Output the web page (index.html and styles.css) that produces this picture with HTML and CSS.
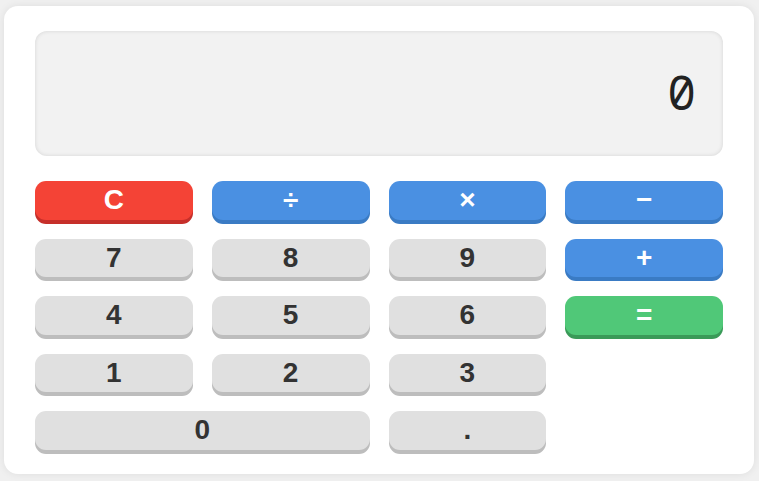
FILE: index.html
```html
<!DOCTYPE html>
<html lang="en">
<head>
<meta charset="utf-8">
<title>Calculator</title>
<link rel="stylesheet" href="styles.css">
</head>
<body>
<div class="calculator">
  <div class="display">0</div>
  <div class="keys">
    <button class="key key-clear">C</button>
    <button class="key key-op">÷</button>
    <button class="key key-op">×</button>
    <button class="key key-op">−</button>
    <button class="key">7</button>
    <button class="key">8</button>
    <button class="key">9</button>
    <button class="key key-op">+</button>
    <button class="key">4</button>
    <button class="key">5</button>
    <button class="key">6</button>
    <button class="key key-eq">=</button>
    <button class="key">1</button>
    <button class="key">2</button>
    <button class="key">3</button>
    <span class="spacer"></span>
    <button class="key key-zero">0</button>
    <button class="key">.</button>
  </div>
</div>
</body>
</html>
```
FILE: styles.css
```css
html, body {
  margin: 0;
  padding: 0;
}
body {
  background: #f0f0f0;
  padding: 6px 5px 7px 4px;
  font-family: "Liberation Sans", Arial, sans-serif;
}
.calculator {
  background: #ffffff;
  border-radius: 14px;
  box-shadow: 0 0 8px rgba(0, 0, 0, 0.08);
  padding: 25px 31px 20px 31px;
  height: 468px;
  box-sizing: border-box;
}
.display {
  height: 125px;
  box-sizing: border-box;
  background: #f2f2f2;
  border-radius: 12px;
  box-shadow: inset 0 0 4px rgba(0, 0, 0, 0.12);
  display: flex;
  align-items: center;
  justify-content: flex-end;
  padding: 0 27px 4px 0;
  font-family: "Noto Sans Mono", Inter, monospace;
  font-size: 48px;
  font-weight: 400;
  color: #222;
}
.keys {
  margin-top: 25px;
  display: grid;
  grid-template-columns: repeat(4, 1fr);
  grid-template-rows: repeat(5, 38.5px);
  column-gap: 19px;
  row-gap: 19px;
}
.key {
  border: none;
  border-radius: 11px;
  background: #e0e0e0;
  box-shadow: 0 4px 0 #bdbdbd;
  color: #333;
  font-family: "Liberation Sans", Arial, sans-serif;
  font-weight: bold;
  font-size: 28px;
  padding: 0;
  margin: 0;
  line-height: 1;
}
.key-clear {
  background: #f44336;
  box-shadow: 0 4px 0 #c62f2a;
  color: #fff;
}
.key-op {
  background: #4a90e2;
  box-shadow: 0 4px 0 #3a7bc4;
  color: #fff;
}
.key-eq {
  background: #50c878;
  box-shadow: 0 4px 0 #3a9a58;
  color: #fff;
}
.key-zero {
  grid-column: span 2;
}
```
